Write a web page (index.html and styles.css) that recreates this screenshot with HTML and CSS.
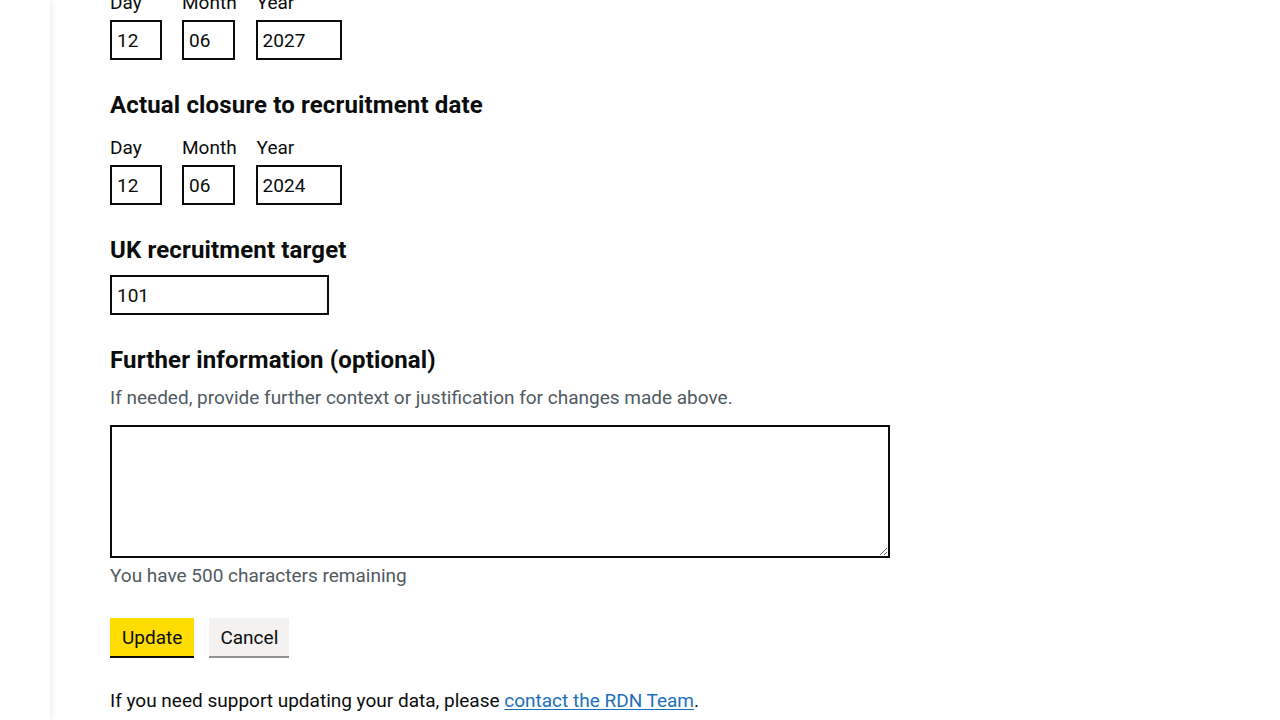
FILE: index.html
```html
<!DOCTYPE html>
<html lang="en">
<head>
<meta charset="utf-8">
<title>Update study data</title>
<link rel="stylesheet" href="styles.css">
</head>
<body>
<div class="layout">
  <aside class="side"></aside>
  <main class="main">
    <div class="form-group first">
      <div class="date-input">
        <div class="date-item">
          <label class="label" for="d1">Day</label>
          <input class="input w-day" id="d1" type="text" value="12">
        </div>
        <div class="date-item">
          <label class="label" for="m1">Month</label>
          <input class="input w-month" id="m1" type="text" value="06">
        </div>
        <div class="date-item">
          <label class="label" for="y1">Year</label>
          <input class="input w-year" id="y1" type="text" value="2027">
        </div>
      </div>
    </div>

    <fieldset class="form-group fieldset">
      <legend class="heading">Actual closure to recruitment date</legend>
      <div class="date-input">
        <div class="date-item">
          <label class="label" for="d2">Day</label>
          <input class="input w-day" id="d2" type="text" value="12">
        </div>
        <div class="date-item">
          <label class="label" for="m2">Month</label>
          <input class="input w-month" id="m2" type="text" value="06">
        </div>
        <div class="date-item">
          <label class="label" for="y2">Year</label>
          <input class="input w-year" id="y2" type="text" value="2024">
        </div>
      </div>
    </fieldset>

    <div class="form-group">
      <label class="heading heading-label" for="target">UK recruitment target</label>
      <input class="input w-target" id="target" type="text" value="101">
    </div>

    <div class="form-group">
      <label class="heading heading-label" for="info">Further information (optional)</label>
      <div class="hint">If needed, provide further context or justification for changes made above.</div>
      <textarea class="textarea" id="info"></textarea>
      <div class="count">You have 500 characters remaining</div>
    </div>

    <div class="button-group">
      <button class="button button-primary" type="button">Update</button>
      <button class="button button-secondary" type="button">Cancel</button>
    </div>

    <p class="body">If you need support updating your data, please <a class="link" href="#">contact the RDN Team</a>.</p>
  </main>
</div>
</body>
</html>
```

FILE: styles.css
```css
* { box-sizing: border-box; }

html, body {
  margin: 0;
  padding: 0;
  background: #ffffff;
  height: 100%;
  overflow: hidden;
}

body {
  font-family: Roboto, "Liberation Sans", Arial, sans-serif;
  color: #0b0c0c;
  font-size: 19px;
  line-height: 25px;
}

.layout {
  display: flex;
  min-height: 100%;
}

.side {
  width: 50px;
  flex: 0 0 50px;
  background: #ffffff;
  box-shadow: 1px 0 6px rgba(0, 0, 0, 0.09);
  position: relative;
  z-index: 1;
}

.main {
  flex: 1;
  padding-left: 60px;
  padding-top: 0;
}

.form-group {
  margin: 0 0 30px 0;
}

.form-group.first {
  margin-top: -10px;
}

.fieldset {
  border: 0;
  padding: 0;
  min-width: 0;
}

.heading {
  display: block;
  font-size: 24px;
  line-height: 30px;
  font-weight: 700;
  padding: 0;
  margin: 0 0 15px 0;
  letter-spacing: 0.15px;
}

.heading-label {
  margin-bottom: 10px;
}

.date-input {
  display: flex;
  gap: 20px;
}

.date-item {
  display: flex;
  flex-direction: column;
}

.label {
  display: block;
  font-size: 19px;
  line-height: 25px;
  margin-bottom: 5px;
}

.input {
  display: block;
  height: 40px;
  padding: 5px;
  border: 2px solid #0b0c0c;
  border-radius: 0;
  font-family: inherit;
  font-size: 19px;
  line-height: 25px;
  color: #0b0c0c;
  background: #ffffff;
  margin: 0;
}

.w-day { width: 52px; }
.w-month { width: 53px; }
.w-year { width: 86px; margin-left: -1px; }
.w-target { width: 219px; }

.hint {
  color: #505a5f;
  font-size: 19px;
  line-height: 25px;
  margin-bottom: 15px;
}

.textarea {
  display: block;
  width: 780px;
  height: 133px;
  padding: 5px;
  border: 2px solid #0b0c0c;
  border-radius: 0;
  font-family: inherit;
  font-size: 19px;
  line-height: 25px;
  margin: 0 0 5px 0;
  resize: vertical;
}

.count {
  color: #505a5f;
  font-size: 19px;
  line-height: 25px;
}

.button-group {
  display: flex;
  gap: 15px;
  margin-bottom: 32px;
}

.button {
  font-family: inherit;
  font-size: 19px;
  line-height: 19px;
  padding: 8px 10px 7px;
  border: 2px solid transparent;
  border-radius: 0;
  color: #0b0c0c;
  cursor: pointer;
  margin: 0;
}

.button-primary {
  background: #ffdd00;
  box-shadow: 0 2px 0 #0b0c0c;
}

.button-secondary {
  background: #f3f2f1;
  box-shadow: 0 2px 0 #929191;
  width: 80px;
  padding-left: 0;
  padding-right: 0;
}

.body {
  margin: 0;
  font-size: 19px;
  line-height: 25px;
}

.link {
  color: #1d70b8;
  text-decoration: underline;
  text-decoration-thickness: 1px;
  text-underline-offset: 0.1em;
}
```
